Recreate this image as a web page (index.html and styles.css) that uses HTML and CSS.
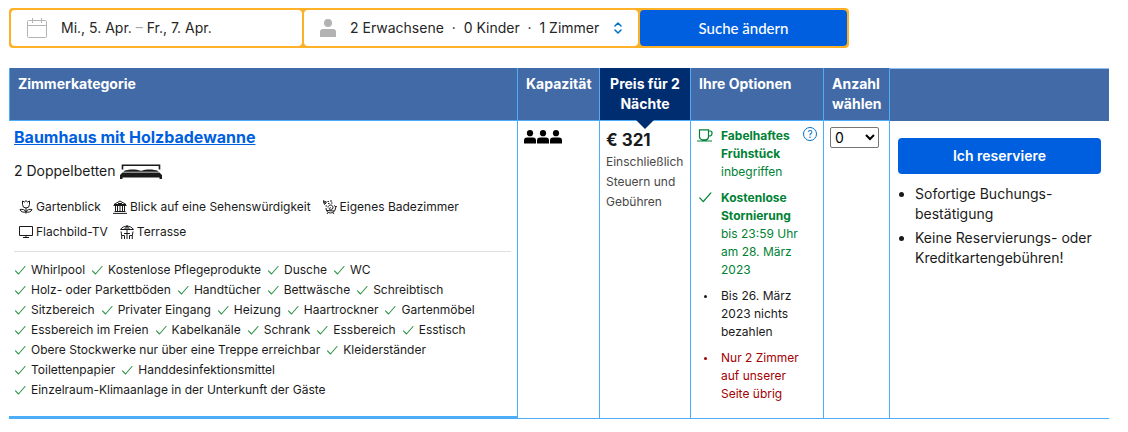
FILE: index.html
```html
<!DOCTYPE html>
<html lang="de">
<head>
<meta charset="UTF-8">
<meta name="viewport" content="width=device-width, initial-scale=1">
<title>Baumhaus mit Holzbadewanne</title>
<link rel="stylesheet" href="styles.css">
</head>
<body>

<!-- Shared icons -->
<svg class="sprite" aria-hidden="true">
  <symbol id="check" viewBox="0 0 12 12">
    <path d="M1.500 6.800l3 3.200L11 2.500" fill="none" stroke="currentColor" stroke-width="1.100" stroke-linecap="round" stroke-linejoin="round"/>
  </symbol>
  <symbol id="person" viewBox="0 0 12 14">
    <circle cx="6" cy="3.2" r="3.1"/>
    <path d="M0 13.6v-3.1a3 3 0 0 1 3-3h6a3 3 0 0 1 3 3v3.1z"/>
  </symbol>
</svg>

<!-- Search bar -->
<form class="search">
  <button type="button" class="search-field">
    <svg class="calendar" viewBox="0 0 20 20" fill="none" stroke="#b3b3b3">
      <rect x=".5" y="2.5" width="19" height="17" rx="1"/>
      <path d="M.5 7.5h19M5.5 0v5M14.5 0v5"/>
    </svg>
    <span>Mi., 5. Apr. <span class="dash">–</span> Fr., 7. Apr.</span>
  </button>
  <button type="button" class="search-field">
    <svg class="guest" viewBox="0 0 16 18" fill="#b3b3b3">
      <circle cx="8" cy="4" r="4"/>
      <path d="M0 18v-5a3 3 0 0 1 3-3h10a3 3 0 0 1 3 3v5z"/>
    </svg>
    <span>2 Erwachsene &nbsp;·&nbsp; 0 Kinder &nbsp;·&nbsp; 1 Zimmer</span>
    <svg class="updown" viewBox="0 0 8 12" fill="none" stroke="#0071c2" stroke-width="1.5" stroke-linecap="round" stroke-linejoin="round">
      <path d="M1 4l3-3 3 3M1 8l3 3 3-3"/>
    </svg>
  </button>
  <button type="submit" class="search-submit">Suche ändern</button>
</form>

<!-- Rooms -->
<table class="rooms">
  <colgroup>
    <col>
    <col class="col-capacity">
    <col class="col-price">
    <col class="col-options">
    <col class="col-count">
    <col class="col-reserve">
  </colgroup>
  <thead>
    <tr>
      <th scope="col">Zimmerkategorie</th>
      <th scope="col">Kapazität</th>
      <th scope="col" class="price-head">Preis für 2 Nächte</th>
      <th scope="col">Ihre Optionen</th>
      <th scope="col"><label for="count">Anzahl wählen</label></th>
      <td class="reserve-head"></td>
    </tr>
  </thead>
  <tbody>
    <tr>
      <td class="room">
        <a href="#" class="room-name">Baumhaus mit Holzbadewanne</a>
        <p class="beds">
          2 Doppelbetten
          <svg class="bed" viewBox="0 0 42 15" fill="#1a1a1a">
            <path d="M2.500 5.500V1.200h37v4.300" fill="none" stroke="#1a1a1a" stroke-width="1.600"/>
            <path d="M4 7c4-2 12-2 16.500-.3h1C26 5 34 5 38 7l.5.800h-35z"/>
            <path d="M2.500 8.500h37L42 11v4h-2.500v-1.500h-37V15H0v-4z"/>
          </svg>
        </p>

        <ul class="facilities">
          <li>
            <svg viewBox="0 0 14 14" fill="none" stroke="#1a1a1a">
              <path d="M3.500 1l2 1L7 .6 8.500 2l2-1v3.500a3.500 3.500 0 0 1-7 0zM7 8v5.500M7 12C6 9.500 3.500 9 1 9.500 2 12 4 12.500 7 12M7 12c1-2.500 3.500-3 6-2.500-1 2.500-3 3-6 2.500"/>
            </svg>
            Gartenblick
          </li>
          <li>
            <svg viewBox="0 0 14 14" fill="none" stroke="#1a1a1a">
              <path d="M1 4.500L7 1l6 3.500zM.5 5.500h13M1.500 11.500h11M0 13.400h14"/>
              <path d="M2.500 6v5M4.500 6v5M7 6v5M9.500 6v5M11.500 6v5M5 3.500h4"/>
            </svg>
            Blick auf eine Sehenswürdigkeit
          </li>
          <li>
            <svg viewBox="0 0 14 14" fill="none" stroke="#1a1a1a">
              <path d="M0 .7l3.500 1.300L1.500 4.500zM1 2.500l2 1"/>
              <path d="M4.500 1.500H6M7 1h2M5 3.500h1.500M2.500 6H4M8 3h1.500" stroke-width="1.200"/>
              <path d="M5 7.500A2.500 2.500 0 1 1 9.500 9C8.500 10.500 6 10 6.300 8.500c.2-1 1.500-1 1.700-.2M3 8c0 3 2 5 4.500 5s5-2 5-5l1-2M11 5.500L13 7M5 12.500L4 14M10 12.500l1 1.500M3.500 10.500l8 .5"/>
            </svg>
            Eigenes Badezimmer
          </li>
          <li>
            <svg viewBox="0 0 14 14" fill="none" stroke="#1a1a1a">
              <path d="M.5 1.500h13v9H.5zM7 10.500v2M4 12.500h6"/>
            </svg>
            Flachbild-TV
          </li>
          <li>
            <svg viewBox="0 0 14 14" fill="none" stroke="#1a1a1a">
              <path d="M.5 4.500C2 2.200 4.500 1.200 7 1.200s5 1 6.500 3.300zM7 0v14M4.500 4.500C5 3 6 2 7 1.200 8 2 9 3 9.500 4.500M4 8.500h6"/>
              <path d="M1 6.500l.7 4v3.500M1.700 10.500H4.500V14M13 6.500l-.7 4v3.500M12.300 10.500H9.500V14"/>
            </svg>
            Terrasse
          </li>
        </ul>

        <ul class="amenities">
          <li><svg><use href="#check"/></svg>Whirlpool</li>
          <li><svg><use href="#check"/></svg>Kostenlose Pflegeprodukte</li>
          <li><svg><use href="#check"/></svg>Dusche</li>
          <li><svg><use href="#check"/></svg>WC</li>
          <li><svg><use href="#check"/></svg>Holz- oder Parkettböden</li>
          <li><svg><use href="#check"/></svg>Handtücher</li>
          <li><svg><use href="#check"/></svg>Bettwäsche</li>
          <li><svg><use href="#check"/></svg>Schreibtisch</li>
          <li><svg><use href="#check"/></svg>Sitzbereich</li>
          <li><svg><use href="#check"/></svg>Privater Eingang</li>
          <li><svg><use href="#check"/></svg>Heizung</li>
          <li><svg><use href="#check"/></svg>Haartrockner</li>
          <li><svg><use href="#check"/></svg>Gartenmöbel</li>
          <li><svg><use href="#check"/></svg>Essbereich im Freien</li>
          <li><svg><use href="#check"/></svg>Kabelkanäle</li>
          <li><svg><use href="#check"/></svg>Schrank</li>
          <li><svg><use href="#check"/></svg>Essbereich</li>
          <li><svg><use href="#check"/></svg>Esstisch</li>
          <li><svg><use href="#check"/></svg>Obere Stockwerke nur über eine Treppe erreichbar</li>
          <li><svg><use href="#check"/></svg>Kleiderständer</li>
          <li><svg><use href="#check"/></svg>Toilettenpapier</li>
          <li><svg><use href="#check"/></svg>Handdesinfektionsmittel</li>
          <li><svg><use href="#check"/></svg>Einzelraum-Klimaanlage in der Unterkunft der Gäste</li>
        </ul>
      </td>

      <td class="capacity">
        <div class="people">
          <svg><use href="#person"/></svg>
          <svg><use href="#person"/></svg>
          <svg><use href="#person"/></svg>
        </div>
      </td>

      <td class="price">
        <strong>€ 321</strong>
        <p>Einschließlich Steuern und Gebühren</p>
      </td>

      <td class="options">
        <ul>
          <li class="good">
            <svg class="cup" viewBox="0 0 16 13" fill="none" stroke="currentColor" stroke-width="1.200">
              <path d="M2.500.8h9v7a3 3 0 0 1-3 3h-3a3 3 0 0 1-3-3zM11.500 2h1.800a1.700 1.700 0 0 1 1.700 1.700v.8A2.500 2.500 0 0 1 12.500 7h-1M0 12h15"/>
            </svg>
            <span><b>Fabelhaftes Frühstück</b> inbegriffen</span>
            <button type="button" class="help" aria-label="Hilfe">?</button>
          </li>
          <li class="good">
            <svg class="tick"><use href="#check"/></svg>
            <span><b>Kostenlose Stornierung</b> bis 23:59 Uhr am 28. März 2023</span>
          </li>
          <li>
            <i class="dot"></i>
            <span>Bis 26. März 2023 nichts bezahlen</span>
          </li>
          <li class="scarce">
            <i class="dot"></i>
            <span>Nur 2 Zimmer auf unserer Seite übrig</span>
          </li>
        </ul>
      </td>

      <td class="count">
        <select id="count">
          <option>0</option>
          <option>1</option>
          <option>2</option>
        </select>
      </td>

      <td class="reserve">
        <button type="button">Ich reserviere</button>
        <ul>
          <li>Sofortige Buchungs-<wbr>bestätigung</li>
          <li>Keine Reservierungs- oder Kreditkartengebühren!</li>
        </ul>
      </td>
    </tr>
  </tbody>
</table>

</body>
</html>
```
FILE: styles.css
```css
* {
  box-sizing: border-box;
}
body {
  margin: 0;
  padding: 8px 19px 8px 9px;
  background: #fff;
  color: #1a1a1a;
  font-family: Inter, sans-serif;
  font-size: 14px;
  line-height: 20px;
}
ul, p {
  margin: 0;
  padding: 0;
}
button {
  border: 0;
  font: inherit;
  cursor: pointer;
}
svg {
  flex: none;
}
.sprite {
  display: none;
}

/* Search bar */
.search {
  display: grid;
  grid-template-columns: 291fr 334fr 207fr;
  gap: 2px;
  max-width: 840px;
  padding: 2px;
  margin-bottom: 20px;
  background: #feb127;
  border-radius: 4px;
}
.search button {
  height: 36px;
  border-radius: 4px;
  white-space: nowrap;
}
.search-field {
  display: flex;
  align-items: center;
  gap: 14px;
  padding: 0 16px;
  background: #fff;
  color: #262626;
  text-align: left;
}
.dash {
  color: #a6a6a6;
}
.calendar {
  width: 20px;
  height: 20px;
}
.guest {
  width: 16px;
  height: 18px;
}
.updown {
  width: 8px;
  height: 12px;
  margin-left: auto;
}
.search .search-submit {
  background: #005fdf;
  color: #fff;
  font-family: Lato, sans-serif;
  font-size: 15px;
  font-weight: 500;
}

/* Room table */
.rooms {
  width: 100%;
  table-layout: fixed;
  border-collapse: separate;
  border-spacing: 0;
}
.col-capacity { width: 82px; }
.col-price { width: 91px; }
.col-options { width: 133px; }
.col-count { width: 66px; }
.col-reserve { width: 219px; }

.rooms th {
  padding: 6px 8px;
  background: #416aa6;
  border-right: 1px solid #4cadfb;
  border-bottom: 1px solid #4cadfb;
  color: #fff;
  font-weight: 700;
  text-align: left;
  vertical-align: top;
}
.rooms th:first-child {
  border-left: 1px solid #4cadfb;
}
.rooms .price-head {
  position: relative;
  background: #002c70;
  text-align: center;
}
/* Arrow that points at the price */
.price-head::after {
  content: "";
  position: absolute;
  top: 100%;
  left: 50%;
  margin-left: -9px;
  border: 9px solid transparent;
  border-top-color: #002c70;
  border-bottom: 0;
}
.reserve-head {
  background: #416aa6;
  border-top: 1px solid #8fc0f0;
}
tbody td {
  padding: 6px;
  border-right: 1px solid #4cadfb;
  border-bottom: 1px solid #4cadfb;
  vertical-align: top;
}

/* Room description */
tbody .room {
  padding: 6px 6px 16px 5px;
  border-bottom: 3px solid #4cadfb;
}
.room-name {
  color: #005fdf;
  font-size: 16px;
  font-weight: 700;
}
.beds {
  display: flex;
  align-items: center;
  gap: 4px;
  margin-top: 13px;
}
.bed {
  width: 42px;
  height: 15px;
}
.facilities {
  display: flex;
  flex-wrap: wrap;
  gap: 5px 12px;
  padding: 16px 5px 9px;
  border-bottom: 1px solid #e0e0e0;
  font-size: 12px;
  list-style: none;
}
.facilities li {
  display: flex;
  align-items: center;
  gap: 3px;
}
.facilities svg {
  width: 14px;
  height: 14px;
}
.amenities {
  display: flex;
  flex-wrap: wrap;
  column-gap: 6px;
  padding-top: 8px;
  font-size: 12px;
  list-style: none;
}
.amenities li {
  display: flex;
  align-items: center;
  gap: 5px;
}
.amenities svg {
  width: 12px;
  height: 12px;
  color: #2e9347;
}

/* Capacity and price */
.people {
  display: flex;
  gap: 1px;
  padding-top: 3px;
}
.people svg {
  width: 12px;
  height: 14px;
  fill: #000;
}
tbody .price {
  padding-top: 9px;
  font-size: 12px;
}
.price strong {
  display: block;
  font-size: 17px;
  font-weight: 700;
}
.price p {
  padding-top: 2px;
  color: #474747;
}

/* Options */
.options ul {
  display: grid;
  gap: 8px;
  font-size: 12px;
  line-height: 18px;
  list-style: none;
}
.options li {
  display: grid;
  grid-template-columns: 16px 1fr auto;
  column-gap: 8px;
}
.options b {
  font-weight: 700;
}
.good {
  color: #008234;
}
.scarce {
  color: #a30000;
}
.cup {
  width: 16px;
  height: 13px;
  margin-top: 2px;
}
.tick {
  width: 14px;
  height: 14px;
  margin: 1px;
}
.dot {
  width: 3px;
  height: 3px;
  margin: 8px 7px;
  background: currentColor;
  border-radius: 50%;
}
.help {
  width: 14px;
  height: 14px;
  padding: 0;
  background: none;
  border: 1px solid #0071c2;
  border-radius: 50%;
  color: #0071c2;
  font-size: 10px;
  line-height: 12px;
}

/* Count and reserve */
.count select {
  width: 49px;
  height: 21px;
  background: #fff;
  border: 1px solid #767676;
  border-radius: 2px;
  color: #000;
  font: 14px Inter, sans-serif;
}
tbody .reserve {
  padding: 17px 8px 8px;
  border-right: 0;
}
.reserve button {
  width: 100%;
  height: 36px;
  background: #005fdf;
  border-radius: 4px;
  color: #fff;
  font-weight: 600;
}
.reserve ul {
  padding: 10px 0 0 17px;
}
.reserve li {
  margin-bottom: 4px;
}
```
